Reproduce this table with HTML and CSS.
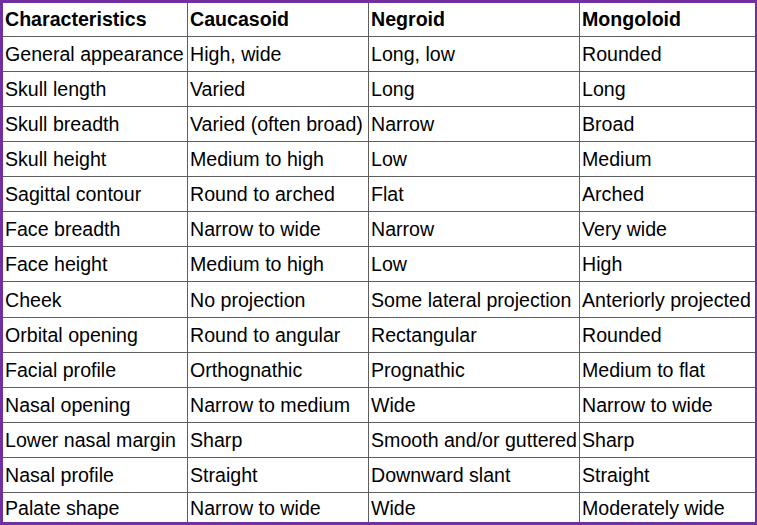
FILE: index.html
```html
<!DOCTYPE html>
<html>
<head>
<meta charset="utf-8">
<link rel="stylesheet" href="styles.css">
</head>
<body>
<div class="frame">
  <div class="grid">
    <div class="cell head">Characteristics</div>
    <div class="cell head">Caucasoid</div>
    <div class="cell head">Negroid</div>
    <div class="cell head">Mongoloid</div>

    <div class="cell">General appearance</div><div class="cell">High, wide</div><div class="cell">Long, low</div><div class="cell">Rounded</div>
    <div class="cell">Skull length</div><div class="cell">Varied</div><div class="cell">Long</div><div class="cell">Long</div>
    <div class="cell">Skull breadth</div><div class="cell">Varied (often broad)</div><div class="cell">Narrow</div><div class="cell">Broad</div>
    <div class="cell">Skull height</div><div class="cell">Medium to high</div><div class="cell">Low</div><div class="cell">Medium</div>
    <div class="cell">Sagittal contour</div><div class="cell">Round to arched</div><div class="cell">Flat</div><div class="cell">Arched</div>
    <div class="cell">Face breadth</div><div class="cell">Narrow to wide</div><div class="cell">Narrow</div><div class="cell">Very wide</div>
    <div class="cell">Face height</div><div class="cell">Medium to high</div><div class="cell">Low</div><div class="cell">High</div>
    <div class="cell">Cheek</div><div class="cell">No projection</div><div class="cell">Some lateral projection</div><div class="cell">Anteriorly projected</div>
    <div class="cell">Orbital opening</div><div class="cell">Round to angular</div><div class="cell">Rectangular</div><div class="cell">Rounded</div>
    <div class="cell">Facial profile</div><div class="cell">Orthognathic</div><div class="cell">Prognathic</div><div class="cell">Medium to flat</div>
    <div class="cell">Nasal opening</div><div class="cell">Narrow to medium</div><div class="cell">Wide</div><div class="cell">Narrow to wide</div>
    <div class="cell">Lower nasal margin</div><div class="cell">Sharp</div><div class="cell">Smooth and/or guttered</div><div class="cell">Sharp</div>
    <div class="cell">Nasal profile</div><div class="cell">Straight</div><div class="cell">Downward slant</div><div class="cell">Straight</div>
    <div class="cell">Palate shape</div><div class="cell">Narrow to wide</div><div class="cell">Wide</div><div class="cell">Moderately wide</div>
  </div>
</div>
</body>
</html>
```

FILE: styles.css
```css
html, body {
  margin: 0;
  padding: 0;
  background: #ffffff;
}
.frame {
  width: 757px;
  height: 525px;
  box-sizing: border-box;
  border-style: solid;
  border-color: #7030a0;
  border-width: 3px 2px 3px 3px;
  overflow: hidden;
}
.grid {
  display: grid;
  grid-template-columns: 184px 180px 210px 1fr;
  grid-template-rows: 32.5px repeat(13, 34.15px) 1fr;
  gap: 1px;
  background: #5e5e5e;
  height: 100%;
  font-family: "Liberation Sans", Arial, sans-serif;
  font-size: 19.6px;
  color: #000;
}
.cell {
  background: #fff;
  display: flex;
  align-items: center;
  padding: 1px 0 0 2px;
  white-space: nowrap;
  overflow: hidden;
}
.head {
  font-weight: bold;
}
```
